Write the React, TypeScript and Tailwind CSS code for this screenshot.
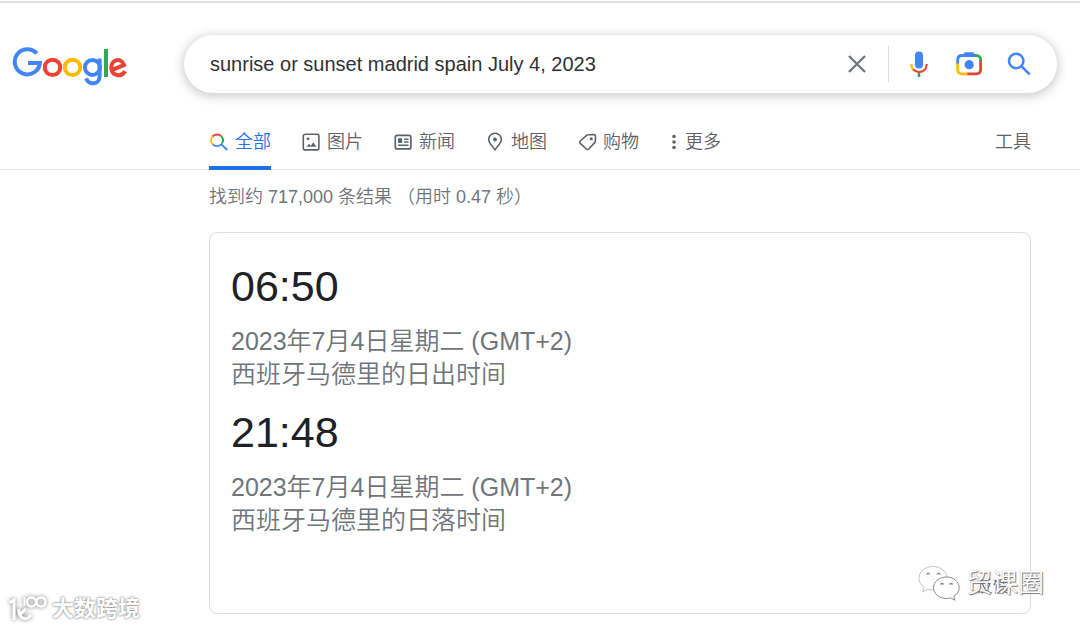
import { useState } from "react";

const tabs = [
  { label: "全部", icon: AllIcon, active: true },
  { label: "图片", icon: ImageIcon },
  { label: "新闻", icon: NewsIcon },
  { label: "地图", icon: MapIcon },
  { label: "购物", icon: TagIcon },
];

const results = [
  {
    time: "06:50",
    date: "2023年7月4日星期二 (GMT+2)",
    place: "西班牙马德里的日出时间",
  },
  {
    time: "21:48",
    date: "2023年7月4日星期二 (GMT+2)",
    place: "西班牙马德里的日落时间",
  },
];

function GoogleLogo() {
  return (
    <svg width="116" height="42" viewBox="12 46 116 42" fill="none" strokeWidth="4" role="img" aria-label="Google">
      <path d="M36.8 53.4A12.6 12.6 0 1 0 39.9 63H28" stroke="#4285f4" />
      <circle cx="52.5" cy="67.4" r="7.7" stroke="#ea4335" />
      <circle cx="72.5" cy="67.4" r="7.7" stroke="#fbbc05" />
      <circle cx="92.4" cy="67.4" r="7.5" stroke="#4285f4" />
      <path d="M99.6 58.6V76.2C99.6 85.2 88.4 85.4 86.1 78.4" stroke="#4285f4" />
      <path d="M106 49V77" stroke="#34a853" />
      <path d="M111.6 70.2L124 65C121.4 57.2 111.3 59.2 111.3 67.5C111.3 76.2 121.6 77.4 125.2 71.2" stroke="#ea4335" />
    </svg>
  );
}

function MicIcon() {
  return (
    <svg width="28" height="28" viewBox="0 0 28 28" fill="none" strokeWidth="2.2">
      <rect x="10" y="1.5" width="8" height="17" rx="4" fill="#4285f4" />
      <path d="M14 22v5" stroke="#34a853" strokeWidth="2.6" />
      <path d="M6.3 14c0 2.7 1 4.7 2.5 6" stroke="#fbbc05" />
      <path d="M8.3 19.5c1.5 1.6 3.4 2.5 5.7 2.5 4.7 0 7.7-3.2 7.7-8" stroke="#ea4335" />
    </svg>
  );
}

function CameraIcon() {
  return (
    <svg width="28" height="28" viewBox="0 0 28 28" fill="none" strokeWidth="2.8">
      <path d="M2.7 14V9.8c0-2.6 1.6-4.3 4.3-4.3h14" stroke="#4285f4" />
      <path d="M7.5 5.5l2.2-3.2h8.6l2.2 3.2z" fill="#4285f4" />
      <path d="M20 5.5h1.3c2.5 0 4.3 1.7 4.3 4.3V12" stroke="#34a853" />
      <path d="M25.6 11.5v8c0 2.6-1.7 4.3-4.3 4.3H12" stroke="#ea4335" />
      <path d="M2.7 13.5v6c0 2.6 1.6 4.3 4.3 4.3h5.5" stroke="#fbbc05" />
      <circle cx="14.2" cy="14.7" r="4.6" fill="#4285f4" />
    </svg>
  );
}

function SearchIcon() {
  return (
    <svg width="28" height="28" viewBox="0 0 28 28" fill="none" stroke="#4285f4" strokeWidth="2.5">
      <circle cx="11.2" cy="11" r="7.2" />
      <path d="M16.2 16l8.4 8.4" />
    </svg>
  );
}

function AllIcon() {
  return (
    <svg width="20" height="20" viewBox="0 0 20 20" fill="none" strokeWidth="1.9">
      <path d="M3.5 4.5A6 6 0 0 1 12.2 4.2" stroke="#ea4335" />
      <path d="M12.2 4.2A6 6 0 0 1 13 11.5" stroke="#34a853" />
      <path d="M3.5 4.5A6 6 0 0 0 3.7 12.3" stroke="#fbbc05" />
      <path d="M3.7 12.3A6 6 0 0 0 12.3 12.3L18.3 18" stroke="#4285f4" />
    </svg>
  );
}

function ImageIcon() {
  return (
    <svg width="20" height="20" viewBox="0 0 20 20" fill="none" stroke="currentColor" strokeWidth="1.6">
      <rect x="2.3" y="2.3" width="15.6" height="15.6" rx="2" />
      <circle cx="7" cy="6.8" r="1.4" fill="currentColor" stroke="none" />
      <path d="M5.5 14.8l2.6-3.1 1.8 2 2.3-3.4 3.3 4.5z" fill="currentColor" stroke="none" />
    </svg>
  );
}

function NewsIcon() {
  return (
    <svg width="20" height="20" viewBox="0 0 20 20" fill="none" stroke="currentColor" strokeWidth="1.7">
      <rect x="2.3" y="3.3" width="15.6" height="13.6" rx="2" />
      <path d="M11 7.2h4.5M11 10h4.5M5 13.3h10.5" strokeWidth="1.5" />
      <rect x="5" y="6.3" width="4.2" height="4.6" fill="currentColor" stroke="none" />
    </svg>
  );
}

function MapIcon() {
  return (
    <svg width="20" height="20" viewBox="0 0 20 20" fill="none" stroke="currentColor" strokeWidth="1.6">
      <path d="M10 18.5C9.6 15.3 3.7 12.2 3.7 7.5a6.3 6.3 0 0 1 12.6 0c0 4.7-5.9 7.8-6.3 11z" />
      <circle cx="10" cy="7.5" r="1.9" fill="currentColor" stroke="none" />
    </svg>
  );
}

function TagIcon() {
  return (
    <svg width="20" height="20" viewBox="0 0 20 20" fill="none" stroke="currentColor" strokeWidth="1.6" strokeLinejoin="round">
      <path d="M11.3 2.7l5.5-.2c1.2 0 1.7.6 1.7 1.7l-.2 5c0 .6-.2 1-.6 1.4l-6 6.4c-.7.7-1.7.7-2.4 0l-6-5.6c-.8-.7-.8-1.7 0-2.4l6.6-5.8c.4-.3.8-.5 1.4-.5z" />
      <circle cx="14.3" cy="6.7" r="1.5" fill="currentColor" stroke="none" />
    </svg>
  );
}

function ChatBubbles() {
  return (
    <svg width="42" height="36" viewBox="0 0 42 36" fill="#fff" stroke="#8a8a8a" strokeWidth="1">
      <path d="M15 1.5C7 1.5 1 6.8 1 13.3c0 3.8 2 6.9 5 9L4.7 27l5.2-2.7c1.6.5 3.3.7 5.1.7 7.7 0 14-5.200 14-11.7S23 1.5 15 1.5z" stroke="#c4c4c4" />
      <path d="M28.5 12C21.3 12 15.5 16.7 15.5 22.7s5.8 10.8 13 10.8c1.4 0 2.8-.2 4-.6l4.5 2.3-1.2-3.9c3.3-2 5.4-5 5.4-8.6C41.2 16.7 35.5 12 28.5 12z" />
      <path d="M8.5 9.5q1.7-2.5 3.4 0M19 9.5q1.7-2.5 3.4 0M22.5 19.5q1.6-2 3.2 0M31.5 19.5q1.6-2 3.2 0" fill="none" strokeWidth="1.3" />
    </svg>
  );
}

function BrandMark() {
  return (
    <svg
      className="drop-shadow-[0_0_2px_#777]"
      width="40"
      height="30"
      viewBox="0 0 40 30"
      fill="none"
      stroke="#fff"
      strokeWidth="3"
    >
      <path d="M1.5 8.5L6 6v20M18 15l-7 6M11 15c-1 9 7 13 12 6" />
      <path d="M16.5 3v9" strokeWidth="2" />
      <circle cx="23.5" cy="8" r="4.5" strokeWidth="2.5" />
      <circle cx="33" cy="8" r="4.5" strokeWidth="2.5" />
    </svg>
  );
}

export default function App() {
  const [query, setQuery] = useState("sunrise or sunset madrid spain July 4, 2023");

  return (
    <div className="relative min-h-screen border-t border-white bg-white font-['Liberation_Sans','Noto_Sans_CJK_SC',sans-serif] font-[350] text-[#202124]">
      {/* Search header */}
      <header className="border-t-2 border-[#dfe1e0] pt-8">
        <form className="flex items-center pr-[23px] pl-3" onSubmit={(e) => e.preventDefault()}>
          <a href="#" className="mr-14 shrink-0 pt-1.5">
            <GoogleLogo />
          </a>
          <div className="flex h-[58px] min-w-0 flex-1 items-center rounded-full bg-white pr-[13px] pl-[26px] shadow-[0_2px_10px_2px_rgba(64,60,67,0.24)]">
            <input
              type="text"
              aria-label="搜索"
              value={query}
              onChange={(e) => setQuery(e.target.value)}
              className="min-w-0 flex-1 bg-transparent text-xl text-[#303134] outline-none"
            />
            <button type="button" aria-label="清除" onClick={() => setQuery("")} className="flex w-[50px] justify-center">
              <svg width="20" height="20" viewBox="0 0 20 20" stroke="#70757a" strokeWidth="2.3">
                <path d="M2 2l16 16M18 2L2 18" />
              </svg>
            </button>
            <span className="mr-[5px] ml-[6px] h-9 w-px bg-[#dadce0]" />
            <button type="button" aria-label="按语音搜索" className="flex w-[50px] justify-center">
              <MicIcon />
            </button>
            <button type="button" aria-label="按图搜索" className="flex w-[50px] justify-center">
              <CameraIcon />
            </button>
            <button type="submit" aria-label="搜索" className="flex w-[50px] justify-center">
              <SearchIcon />
            </button>
          </div>
        </form>

        {/* Result type tabs */}
        <nav className="mt-[37px] flex items-start border-b border-[#e4e6e9] pr-[49px] pl-[209px] text-lg leading-6 text-[#5f6368]">
          <div className="-mb-px flex gap-[30px]">
            {tabs.map((tab) => (
              <a
                key={tab.label}
                href="#"
                className={
                  tab.active
                    ? "flex items-center gap-1.5 border-b-4 border-[#1a73e8] pb-3 text-[#1a73e8]"
                    : "flex items-center gap-1.5 border-b-4 border-transparent pb-3"
                }
              >
                <tab.icon />
                {tab.label}
              </a>
            ))}
            <button type="button" className="flex items-center gap-1.5 border-b-4 border-transparent pb-3">
              <svg width="10" height="20" viewBox="0 0 10 20" fill="currentColor">
                <circle cx="5" cy="4.5" r="1.8" />
                <circle cx="5" cy="10" r="1.8" />
                <circle cx="5" cy="15.5" r="1.8" />
              </svg>
              更多
            </button>
          </div>
          <button type="button" className="ml-auto">
            工具
          </button>
        </nav>
      </header>

      {/* Results */}
      <main className="pr-[49px] pl-[209px]">
        <p className="pt-[15px] text-lg leading-6 text-[#70757a]">找到约 717,000 条结果 （用时 0.47 秒）</p>

        <section className="mt-[23px] rounded-lg border border-[#dadce0] px-[21px] pt-[29px] pb-[14px]">
          {results.map((result) => (
            <div key={result.time} className="mb-[17px]">
              <h2 className="mb-[15px] text-[43px] leading-[48px]">{result.time}</h2>
              <p className="text-[25px] leading-[33px] text-[#70757a]">{result.date}</p>
              <p className="text-[25px] leading-[33px] text-[#70757a]">{result.place}</p>
            </div>
          ))}
          <div className="flex justify-end pt-[21px]">
            <a href="#" className="text-base leading-6 text-[#5f6368]">
              反馈
            </a>
          </div>
        </section>
      </main>

      {/* Watermarks */}
      <div className="absolute right-9 bottom-7 flex items-center gap-1.5 text-[26px] leading-9 text-white">
        <ChatBubbles />
        <span className="[text-shadow:1px_1px_1px_#777,0_0_1px_#999]">贸课圈</span>
      </div>
      <div className="absolute bottom-1 left-2 flex items-center gap-1 text-[22px] leading-8 font-bold text-white">
        <BrandMark />
        <span className="[text-shadow:0_0_2px_#888,0_0_3px_#aaa]">大数跨境</span>
      </div>
    </div>
  );
}
